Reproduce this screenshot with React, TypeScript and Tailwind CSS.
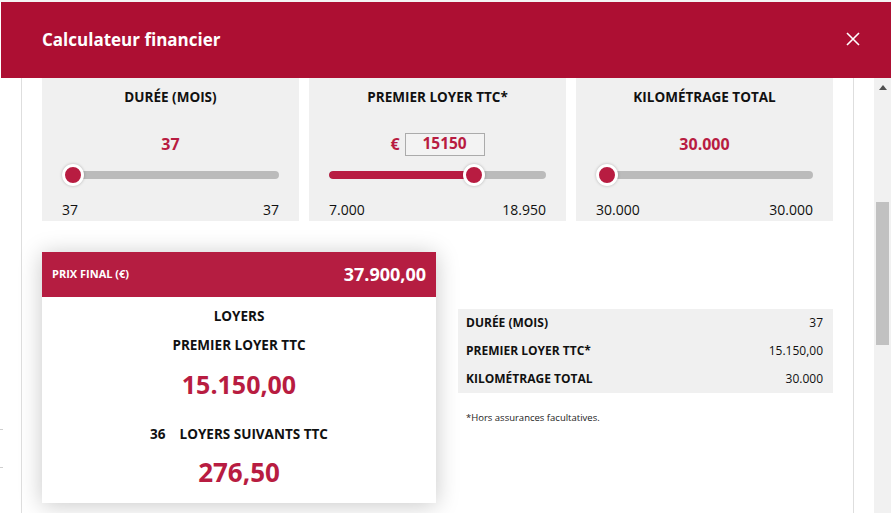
import React from "react";

const F = { fontFamily: '"Open Sans", "Liberation Sans", sans-serif' };

function Slider({ pct, fill }: { pct: number; fill?: boolean }) {
  return (
    <div className="relative h-[22px] w-full flex items-center">
      <div className="h-[8px] w-full rounded-full bg-[#bbbbbb] relative overflow-hidden">
        {fill && <div className="absolute left-0 top-0 h-full bg-[#b81c41] rounded-full" style={{ width: `${pct}%` }} />}
      </div>
      <div
        className="absolute top-0 w-[22px] h-[22px] rounded-full bg-[#b81c41] border-[3px] border-white shadow-[0_0_3px_rgba(0,0,0,0.25)]"
        style={{ left: `calc(${pct}% - 11px)` }}
      />
    </div>
  );
}

function Card({ title, value, min, max, pct, fill, input }: { title: string; value: string; min: string; max: string; pct: number; fill?: boolean; input?: boolean }) {
  return (
    <div className="w-[257px] h-[143px] bg-[#f0f0f0] flex flex-col items-center px-[20px]">
      <div className="h-[38px] flex items-center justify-center text-[13.5px] font-bold text-[#111]">{title}</div>
      <div className="mt-[14px] h-[28px] flex items-center justify-center">
        {input ? (
          <div className="flex items-center gap-[5px]">
            <span className="text-[#b81c41] font-bold text-[16px]">€</span>
            <div className="w-[80px] h-[23px] border border-[#ababab] bg-[#f3f3f3] flex items-center justify-center text-[#b81c41] font-bold text-[15.5px]">{value}</div>
          </div>
        ) : (
          <span className="text-[#b81c41] font-bold text-[16px]">{value}</span>
        )}
      </div>
      <div className="mt-[6px] w-full">
        <Slider pct={pct} fill={fill} />
      </div>
      <div className="mt-[12px] h-[22px] w-full flex items-center justify-between text-[14px] text-[#111]">
        <span>{min}</span>
        <span>{max}</span>
      </div>
    </div>
  );
}

export default function App() {
  return (
    <div className="w-[891px] h-[513px] bg-white overflow-hidden relative" style={F}>
      <div className="h-[2px] bg-[#f4f4f4]" />
      <div className="h-[76px] bg-[#ad0f33] flex items-center justify-between pl-[41px] pr-[31px] ml-[1px]">
        <span className="text-white font-bold text-[17px]">Calculateur financier</span>
        <svg width="14" height="14" viewBox="0 0 14 14" className="mt-[-2px]">
          <path d="M1 1 L13 13 M13 1 L1 13" stroke="white" strokeWidth="1.6" />
        </svg>
      </div>
      <div className="flex h-[435px]">
        <div className="w-[21px] relative">
          <div className="absolute left-0 top-[351px] w-[3px] h-px bg-[#cfcfcf]" />
          <div className="absolute left-0 top-[389px] w-[3px] h-px bg-[#cfcfcf]" />
        </div>
        <div className="w-px bg-[#dedede]" />
        <div className="w-[831px] px-[20px]">
          <div className="flex gap-[10px]">
            <Card title="DURÉE (MOIS)" value="37" min="37" max="37" pct={5} />
            <Card title="PREMIER LOYER TTC*" value="15150" min="7.000" max="18.950" pct={67} fill input />
            <Card title="KILOMÉTRAGE TOTAL" value="30.000" min="30.000" max="30.000" pct={5} />
          </div>
          <div className="flex mt-[31px]">
            <div className="w-[394px] h-[251px] bg-white shadow-[0_2px_22px_rgba(0,0,0,0.22)] flex flex-col">
              <div className="h-[45px] bg-[#b51d41] flex items-center justify-between pl-[10px] pr-[10px]">
                <span className="text-white font-bold text-[11px]">PRIX FINAL (€)</span>
                <span className="text-white font-bold text-[18px]">37.900,00</span>
              </div>
              <div className="flex flex-col items-center text-[#111]">
                <div className="mt-[11px] h-[16px] leading-[16px] text-[13.5px] font-bold">LOYERS</div>
                <div className="mt-[13px] h-[16px] leading-[16px] text-[13.5px] font-bold">PREMIER LOYER TTC</div>
                <div className="mt-[16px] h-[30px] leading-[30px] text-[25px] font-bold text-[#b81c41]">15.150,00</div>
                <div className="mt-[27px] h-[16px] leading-[16px] text-[13.5px] font-bold">36&nbsp;&nbsp;&nbsp; LOYERS SUIVANTS TTC</div>
                <div className="mt-[15px] h-[30px] leading-[30px] text-[26px] font-bold text-[#b81c41]">276,50</div>
              </div>
            </div>
            <div className="ml-[22px] mt-[57px] w-[375px]">
              <div className="bg-[#f0f0f0] pl-[8px] pr-[10px] text-[12px] text-[#111]">
                <div className="h-[28px] flex items-center justify-between"><span className="font-bold">DURÉE (MOIS)</span><span>37</span></div>
                <div className="h-[28px] flex items-center justify-between"><span className="font-bold">PREMIER LOYER TTC*</span><span>15.150,00</span></div>
                <div className="h-[28px] flex items-center justify-between"><span className="font-bold">KILOMÉTRAGE TOTAL</span><span>30.000</span></div>
              </div>
              <div className="pl-[8px] mt-[18px] text-[9.5px] text-[#222]">*Hors assurances facultatives.</div>
            </div>
          </div>
        </div>
        <div className="w-px bg-[#dedede]" />
        <div className="w-[20px]" />
        <div className="w-[17px] bg-[#f1f1f1] relative">
          <svg width="8" height="5" viewBox="0 0 8 5" className="absolute left-[5px] top-[7px]">
            <path d="M0 5 L4 0 L8 5 Z" fill="#505050" />
          </svg>
          <div className="absolute left-[2px] top-[124px] w-[13px] h-[143px] bg-[#c1c1c1]" />
        </div>
      </div>
    </div>
  );
}
